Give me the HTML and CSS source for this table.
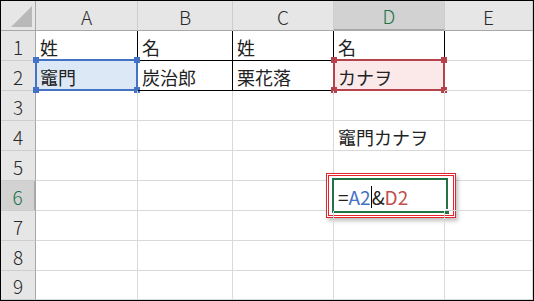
FILE: index.html
```html
<!DOCTYPE html>
<html lang="ja">
<head>
<meta charset="UTF-8">
<title>連結</title>
<link rel="stylesheet" href="styles.css">
</head>
<body>

<div class="sheet">
    <!-- column headers -->
    <div class="hd corner"><span class="tri"></span></div>
    <div class="hd col">A</div>
    <div class="hd col">B</div>
    <div class="hd col">C</div>
    <div class="hd col active-col">D</div>
    <div class="hd col last">E</div>

    <!-- row 1 -->
    <div class="hd row">1</div>
    <div class="cell ruled">姓</div>
    <div class="cell ruled">名</div>
    <div class="cell ruled">姓</div>
    <div class="cell ruled">名</div>
    <div class="cell"></div>

    <!-- row 2 -->
    <div class="hd row">2</div>
    <div class="cell ruled ref ref-blue">竈門<span class="box"><i class="tl"></i><i class="tr"></i><i class="bl"></i><i class="br"></i></span></div>
    <div class="cell ruled">炭治郎</div>
    <div class="cell ruled">栗花落</div>
    <div class="cell ruled ref ref-red">カナヲ<span class="box"><i class="tl"></i><i class="tr"></i><i class="bl"></i><i class="br"></i></span></div>
    <div class="cell"></div>

    <div class="hd row">3</div>
    <div class="cell"></div><div class="cell"></div><div class="cell"></div><div class="cell"></div><div class="cell"></div>

    <div class="hd row">4</div>
    <div class="cell"></div><div class="cell"></div><div class="cell"></div>
    <div class="cell">竈門カナヲ</div>
    <div class="cell"></div>

    <div class="hd row">5</div>
    <div class="cell"></div><div class="cell"></div><div class="cell"></div><div class="cell"></div><div class="cell"></div>

    <!-- row 6: formula being edited -->
    <div class="hd row active-row">6</div>
    <div class="cell"></div><div class="cell"></div><div class="cell"></div>
    <div class="cell editing">
        <div class="callout"></div>
        <div class="active"><span class="fill-handle"></span></div>
        <div class="formula">=<span class="blue">A2</span><span class="caret"></span>&amp;<span class="red">D2</span></div>
    </div>
    <div class="cell"></div>

    <div class="hd row">7</div>
    <div class="cell"></div><div class="cell"></div><div class="cell"></div><div class="cell"></div><div class="cell"></div>

    <div class="hd row">8</div>
    <div class="cell"></div><div class="cell"></div><div class="cell"></div><div class="cell"></div><div class="cell"></div>

    <div class="hd row">9</div>
    <div class="cell"></div><div class="cell"></div><div class="cell"></div><div class="cell"></div><div class="cell"></div>
</div>

</body>
</html>
```

FILE: styles.css
```css
:root {
    --grid: #d9d9d9;
    --head-bg: #e6e6e6;
    --head-line: #cdcdcd;
    --head-active: #d2d2d2;
    --green: #217346;
    --blue: #4472c4;
    --red: #b6434b;
}
* { box-sizing: border-box; }
body {
    margin: 0;
    background: #fff;
    font-family: "Noto Sans CJK JP", "Noto Sans", sans-serif;
    color: #222;
}
.sheet {
    width: 534px;
    height: 301px;
    border: 1px solid #000;
    display: grid;
    grid-template-columns: 35px 102px 95px 101px 111px 1fr;
    grid-template-rows: repeat(9, 30px) 1fr;
    overflow: hidden;
}

/* headers */
.hd {
    background: var(--head-bg);
    color: #2a2a2a;
    font-size: 19px;
    font-weight: 300;
    display: flex;
    align-items: center;
    justify-content: center;
    border-right: 1px solid var(--head-line);
    border-bottom: 1px solid var(--head-line);
}
.hd.col { border-bottom-color: #a8a8a8; padding-top: 1px; }
.hd.row { border-right-color: #a8a8a8; padding-top: 1px; }
.corner { position: relative; border-bottom-color: #a8a8a8; border-right-color: #a8a8a8; }
.tri {
    position: absolute;
    right: 3px;
    bottom: 3px;
    width: 0;
    height: 0;
    border-left: 21px solid transparent;
    border-bottom: 21px solid #b9b9b9;
}
.active-col {
    background: var(--head-active);
    color: var(--green);
    border-bottom: 2px solid var(--green);
}
.active-row {
    background: var(--head-active);
    color: var(--green);
    border-right: 2px solid var(--green);
}

/* cells */
.cell {
    position: relative;
    font-size: 18px;
    display: flex;
    align-items: center;
    padding: 2px 0 0 4px;
    border-right: 1px solid var(--grid);
    border-bottom: 1px solid var(--grid);
    white-space: nowrap;
}
.cell.ruled { border-right-color: #000; border-bottom-color: #000; }

/* range references highlighted while editing */
.ref .box {
    position: absolute;
    top: -2px;
    left: -1px;
    right: -1px;
    bottom: -1px;
    border: 2px solid;
}
.ref-blue { background: #dde8f6; }
.ref-blue .box { border-color: var(--blue); }
.ref-red { background: #fbe9ea; }
.ref-red .box { border-color: var(--red); }
.box i {
    position: absolute;
    width: 6px;
    height: 6px;
}
.ref-blue .box i { background: var(--blue); }
.ref-red .box i { background: var(--red); }
.box .tl { top: -4px; left: -4px; }
.box .tr { top: -4px; right: -4px; }
.box .bl { bottom: -4px; left: -4px; }
.box .br { bottom: -4px; right: -4px; }

/* D6 */
.editing { overflow: visible; }
.callout {
    position: absolute;
    top: -8px;
    left: -8px;
    right: -12px;
    bottom: -8px;
    background: #fff;
    border: 3px double #e3262d;
    box-shadow: 2px 3px 4px rgba(0, 0, 0, 0.25);
}
.active {
    position: absolute;
    top: -3px;
    left: -2px;
    right: -4px;
    bottom: -3px;
    border: 2px solid var(--green);
}
.fill-handle {
    position: absolute;
    right: -4px;
    bottom: -4px;
    width: 6px;
    height: 6px;
    background: var(--green);
    border: 1px solid #fff;
}
.formula {
    position: relative;
    font-size: 19px;
    display: flex;
    align-items: center;
}
.formula .blue { color: var(--blue); }
.formula .red { color: #c0504d; }
.caret {
    display: inline-block;
    width: 1px;
    height: 22px;
    background: #000;
}
```
